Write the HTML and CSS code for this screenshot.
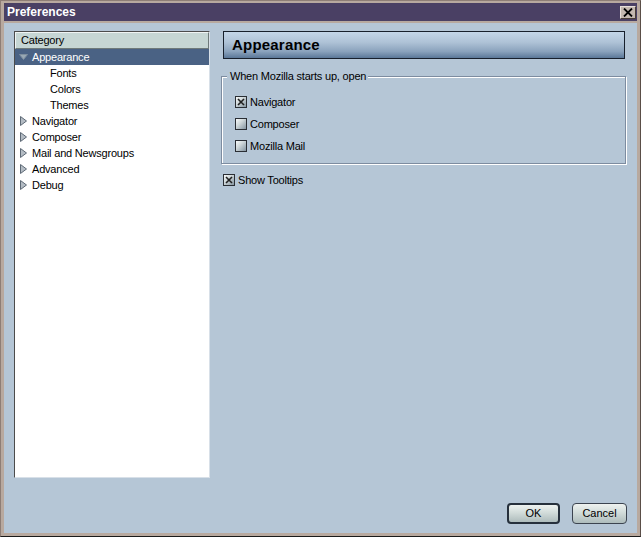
FILE: index.html
```html
<!DOCTYPE html>
<html>
<head>
<meta charset="utf-8">
<title>Preferences</title>
<link rel="stylesheet" href="styles.css">
</head>
<body>
<div class="window">
  <div class="frame">
    <div class="titlebar">
      <span class="title">Preferences</span>
      <span class="close"><svg width="10" height="9" viewBox="0 0 10 9"><path d="M1 0.5 L9 8.5 M9 0.5 L1 8.5" stroke="#000" stroke-width="1.8"/></svg></span>
    </div>
    <div class="client">
      <div class="main">
        <div class="tree">
          <div class="tree-head">Category</div>
          <div class="row selected"><span class="twisty"><svg width="9" height="6" viewBox="0 0 9 6"><path d="M0.5 0.5 H8.5 L4.5 5.5 Z" fill="#98a8b4" stroke="#7d8e9e" stroke-width="1"/></svg></span>Appearance</div>
          <div class="row child">Fonts</div>
          <div class="row child">Colors</div>
          <div class="row child">Themes</div>
          <div class="row"><span class="twisty"><svg width="7" height="10" viewBox="0 0 7 10"><path d="M0.5 0.5 L6.5 5 L0.5 9.5 Z" fill="#b4bcc4" stroke="#5e6a76" stroke-width="1"/></svg></span>Navigator</div>
          <div class="row"><span class="twisty"><svg width="7" height="10" viewBox="0 0 7 10"><path d="M0.5 0.5 L6.5 5 L0.5 9.5 Z" fill="#b4bcc4" stroke="#5e6a76" stroke-width="1"/></svg></span>Composer</div>
          <div class="row"><span class="twisty"><svg width="7" height="10" viewBox="0 0 7 10"><path d="M0.5 0.5 L6.5 5 L0.5 9.5 Z" fill="#b4bcc4" stroke="#5e6a76" stroke-width="1"/></svg></span>Mail and Newsgroups</div>
          <div class="row"><span class="twisty"><svg width="7" height="10" viewBox="0 0 7 10"><path d="M0.5 0.5 L6.5 5 L0.5 9.5 Z" fill="#b4bcc4" stroke="#5e6a76" stroke-width="1"/></svg></span>Advanced</div>
          <div class="row"><span class="twisty"><svg width="7" height="10" viewBox="0 0 7 10"><path d="M0.5 0.5 L6.5 5 L0.5 9.5 Z" fill="#b4bcc4" stroke="#5e6a76" stroke-width="1"/></svg></span>Debug</div>
        </div>
        <div class="panel">
          <div class="panel-head">Appearance</div>
          <fieldset class="group">
            <legend>When Mozilla starts up, open</legend>
            <div class="check"><span class="box checked"><svg width="8" height="8" viewBox="0 0 8 8"><path d="M1 1 L7 7 M7 1 L1 7" stroke="#202020" stroke-width="1.6"/></svg></span>Navigator</div>
            <div class="check"><span class="box"></span>Composer</div>
            <div class="check"><span class="box"></span>Mozilla Mail</div>
          </fieldset>
          <div class="check tooltips"><span class="box checked"><svg width="8" height="8" viewBox="0 0 8 8"><path d="M1 1 L7 7 M7 1 L1 7" stroke="#202020" stroke-width="1.6"/></svg></span>Show Tooltips</div>
        </div>
      </div>
      <div class="buttons">
        <button class="btn default">OK</button>
        <button class="btn cancel">Cancel</button>
      </div>
    </div>
  </div>
</div>
</body>
</html>
```

FILE: styles.css
```css
* { box-sizing: border-box; }
html, body { margin: 0; padding: 0; background: #000; }
body {
  font-family: "Liberation Sans", Arial, sans-serif;
  font-size: 11px;
  letter-spacing: -0.2px;
  color: #000;
}
.window {
  width: 641px;
  height: 537px;
  border: 1px solid #8e7e76;
  border-bottom-color: #1a1a1a;
  border-right-color: #5a4e48;
  background: #b5a69c;
}
.frame {
  height: 100%;
  border-style: solid;
  border-color: #b8a99f;
  border-width: 2px 3px 3px 3px;
  display: flex;
  flex-direction: column;
}
.titlebar {
  height: 20px;
  background: #4a4064;
  border-bottom: 2px solid #b8a99f;
  display: flex;
  align-items: flex-start;
  justify-content: space-between;
  padding: 0 1px 0 3px;
}
.title {
  color: #fff;
  font-weight: bold;
  font-size: 12px;
  letter-spacing: 0;
  line-height: 18px;
}
.close {
  margin-top: 3px;
  width: 16px;
  height: 13px;
  background: #c4b8b0;
  border: 1px solid;
  border-color: #e8e0da #4a3e38 #4a3e38 #e8e0da;
  display: flex;
  align-items: center;
  justify-content: center;
}
.client {
  flex: 1;
  background: #b5c6d6;
  padding: 8px 10px 9px 10px;
  display: flex;
  flex-direction: column;
}
.main {
  flex: 1;
  display: flex;
  gap: 11px;
}
.tree {
  width: 196px;
  height: 447px;
  background: #fff;
  border: 1px solid;
  border-color: #4c4c4c #d8e0e8 #d8e0e8 #4c4c4c;
}
.tree-head {
  height: 17px;
  line-height: 15px;
  background: #c6d6d4;
  border: 1px solid;
  border-color: #f0f4f4 #6e7a7a #6e7a7a #f0f4f4;
  padding-left: 5px;
}
.row {
  height: 16px;
  line-height: 16px;
  display: flex;
  align-items: center;
  padding-left: 4px;
  white-space: nowrap;
}
.row.selected {
  background: #4a6284;
  color: #fff;
}
.row.child { padding-left: 35px; }
.twisty {
  width: 9px;
  margin-right: 4px;
  display: flex;
  align-items: center;
  justify-content: flex-start;
}
.row .twisty svg { display: block; }
.row:not(.selected) .twisty { padding-left: 1px; }
.panel {
  width: 405px;
  display: flex;
  flex-direction: column;
}
.panel-head {
  height: 28px;
  margin: 0 1px 0 2px;
  border: 1px solid #18202c;
  background: linear-gradient(to bottom, #c4d6e8 0%, #aec2d6 40%, #8aa2bc 75%, #5b7898 100%);
  font-weight: bold;
  font-size: 15px;
  letter-spacing: 0.2px;
  line-height: 26px;
  padding-left: 8px;
  color: #000;
}
.group {
  margin: 11px 0 0 0;
  padding: 8px 0 6px 0;
  border: 1px solid #7d8ca0;
  box-shadow: inset 1px 1px 0 #fff, 1px 1px 0 #fff;
  min-width: 0;
}
.group legend {
  margin-left: 5px;
  padding: 0 2px 0 3px;
  line-height: 13px;
  background: #b5c6d6;
}
.check {
  height: 22px;
  display: flex;
  align-items: center;
  padding-left: 13px;
  white-space: nowrap;
}
.box {
  width: 12px;
  height: 12px;
  margin-right: 3px;
  border: 1px solid #2a2e34;
  background: linear-gradient(135deg, #f8fafa 0%, #d0d8da 40%, #8494a0 100%);
  display: flex;
  align-items: center;
  justify-content: center;
}
.box svg { display: block; }
.check.tooltips {
  margin-top: 5px;
  padding-left: 2px;
}
.buttons {
  display: flex;
  justify-content: flex-end;
  gap: 12px;
}
.btn {
  font-family: "Liberation Sans", Arial, sans-serif;
  font-size: 11px;
  height: 21px;
  padding: 0;
  border-radius: 4px;
  background: linear-gradient(to bottom, #eef2f0 0%, #d2dcda 45%, #aebcbc 100%);
  color: #000;
  line-height: 17px;
}
.btn.default {
  width: 53px;
  border: 2px solid #26303c;
}
.btn.cancel {
  width: 55px;
  border: 1px solid #3c4450;
}
```
